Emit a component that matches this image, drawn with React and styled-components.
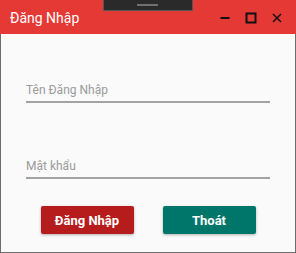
import React from "react";
import styled, { createGlobalStyle } from "styled-components";

const Global = createGlobalStyle`
  html, body {
    margin: 0;
    padding: 0;
    background: #fafafa;
  }
  * {
    box-sizing: border-box;
  }
`;

const Window = styled.div`
  width: 296px;
  height: 253px;
  display: flex;
  flex-direction: column;
  background: #fafafa;
  border: 1px solid #6e6e6e;
  border-top: none;
  font-family: Roboto, "Noto Sans", sans-serif;
`;

const TitleBar = styled.div`
  position: relative;
  height: 34px;
  margin: 0 -1px;
  display: flex;
  align-items: center;
  justify-content: space-between;
  background: #e53935;
  padding: 1px 10px 0 10px;
`;

const Title = styled.span`
  color: #fff;
  font-size: 14px;
`;

const Controls = styled.div`
  display: flex;
  align-items: center;
  gap: 14px;
  margin-right: 3px;
`;

/* snap handle that sits over the top edge of the title bar */
const Handle = styled.svg`
  position: absolute;
  top: 0;
  left: 103px;
  display: block;
`;

const Form = styled.div`
  display: flex;
  flex-direction: column;
  padding: 49px 25px 0 25px;
  gap: 56px;
`;

const Field = styled.div`
  border-bottom: 2px solid #a3a3a3;
  padding-bottom: 4px;
`;

const Label = styled.div`
  color: #9b9b9b;
  font-size: 12px;
  line-height: 14px;
`;

const Actions = styled.div`
  display: flex;
  justify-content: center;
  gap: 29px;
  margin-top: 27px;
`;

const Button = styled.button`
  width: 93px;
  height: 28px;
  border: none;
  border-radius: 2px;
  background: ${(p) => p.$bg};
  color: #fff;
  font-family: Roboto, "Noto Sans", sans-serif;
  font-weight: 700;
  font-size: 13px;
  box-shadow: 0 1px 3px rgba(0, 0, 0, 0.3);
  cursor: pointer;
`;

const Icon = ({ children }) => (
  <svg width="12" height="12" viewBox="0 0 12 12" fill="none" stroke="#111">
    {children}
  </svg>
);

export default function App() {
  return (
    <>
      <Global />
      <Window>
        <TitleBar>
          <Title>Đăng Nhập</Title>
          <Handle width="90" height="11" viewBox="0 0 90 11">
            <rect x="0.5" y="-1" width="89" height="11.5" fill="#2a2a2a" stroke="#555" />
            <rect x="34" y="4" width="21" height="2" fill="#707070" />
          </Handle>
          <Controls>
            <Icon>
              <line x1="1.5" y1="6" x2="10.5" y2="6" strokeWidth="2" />
            </Icon>
            <Icon>
              <rect x="1.5" y="1.5" width="9" height="9" strokeWidth="2" />
            </Icon>
            <Icon>
              <path d="M2 2 L10 10 M10 2 L2 10" strokeWidth="1.5" />
            </Icon>
          </Controls>
        </TitleBar>
        <Form>
          <Field>
            <Label>Tên Đăng Nhập</Label>
          </Field>
          <Field>
            <Label>Mật khẩu</Label>
          </Field>
        </Form>
        <Actions>
          <Button $bg="#b71c1c">Đăng Nhập</Button>
          <Button $bg="#00766a">Thoát</Button>
        </Actions>
      </Window>
    </>
  );
}
